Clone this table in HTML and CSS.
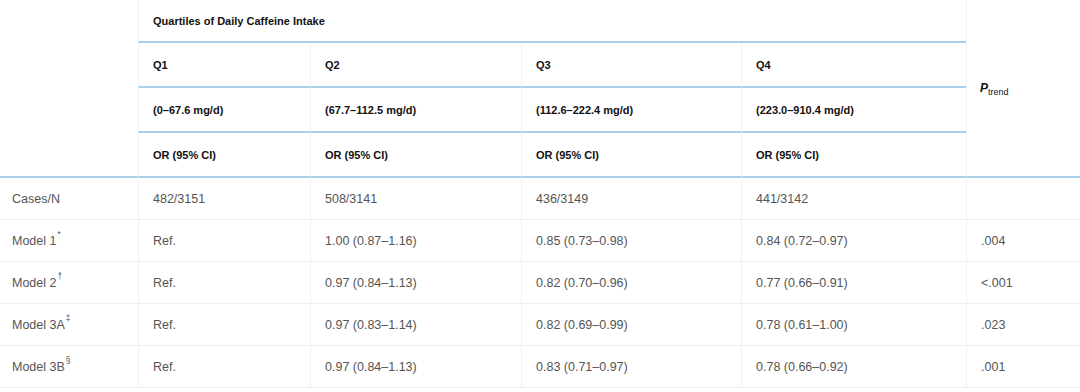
FILE: index.html
```html
<!DOCTYPE html>
<html lang="en">
<head>
<meta charset="utf-8">
<title>Quartiles of Daily Caffeine Intake</title>
<link rel="stylesheet" href="styles.css">
</head>
<body>
<table class="data">
  <colgroup>
    <col class="c0">
    <col class="c1">
    <col class="c2">
    <col class="c3">
    <col class="c4">
    <col class="c5">
  </colgroup>
  <thead>
    <tr class="h0">
      <th class="stub" rowspan="4"></th>
      <th class="group" colspan="4">Quartiles of Daily Caffeine Intake</th>
      <th class="ptrend" rowspan="4"><i class="p">P</i><sub class="sub">trend</sub></th>
    </tr>
    <tr class="h1">
      <th class="hc">Q1</th>
      <th class="hc">Q2</th>
      <th class="hc">Q3</th>
      <th class="hc">Q4</th>
    </tr>
    <tr class="h1">
      <th class="hc">(0–67.6 mg/d)</th>
      <th class="hc">(67.7–112.5 mg/d)</th>
      <th class="hc">(112.6–222.4 mg/d)</th>
      <th class="hc">(223.0–910.4 mg/d)</th>
    </tr>
    <tr class="h1 last">
      <th class="hc">OR (95% CI)</th>
      <th class="hc">OR (95% CI)</th>
      <th class="hc">OR (95% CI)</th>
      <th class="hc">OR (95% CI)</th>
    </tr>
  </thead>
  <tbody>
    <tr>
      <td class="lab">Cases/N</td>
      <td>482/3151</td>
      <td>508/3141</td>
      <td>436/3149</td>
      <td>441/3142</td>
      <td></td>
    </tr>
    <tr>
      <td class="lab">Model 1<sup class="fn">*</sup></td>
      <td>Ref.</td>
      <td>1.00 (0.87–1.16)</td>
      <td>0.85 (0.73–0.98)</td>
      <td>0.84 (0.72–0.97)</td>
      <td>.004</td>
    </tr>
    <tr>
      <td class="lab">Model 2<sup class="fn">†</sup></td>
      <td>Ref.</td>
      <td>0.97 (0.84–1.13)</td>
      <td>0.82 (0.70–0.96)</td>
      <td>0.77 (0.66–0.91)</td>
      <td>&lt;.001</td>
    </tr>
    <tr>
      <td class="lab">Model 3A<sup class="fn">‡</sup></td>
      <td>Ref.</td>
      <td>0.97 (0.83–1.14)</td>
      <td>0.82 (0.69–0.99)</td>
      <td>0.78 (0.61–1.00)</td>
      <td>.023</td>
    </tr>
    <tr>
      <td class="lab">Model 3B<sup class="fn">§</sup></td>
      <td>Ref.</td>
      <td>0.97 (0.84–1.13)</td>
      <td>0.83 (0.71–0.97)</td>
      <td>0.78 (0.66–0.92)</td>
      <td>.001</td>
    </tr>
  </tbody>
</table>
</body>
</html>
```
FILE: styles.css
```css
html, body {
  margin: 0;
  padding: 0;
  background: #ffffff;
}

body {
  font-family: "Liberation Sans", Arial, Helvetica, sans-serif;
}

.data {
  width: 1080px;
  table-layout: fixed;
  border-collapse: separate;
  border-spacing: 0;
}

.c0 { width: 138px; }
.c1 { width: 172px; }
.c2 { width: 211px; }
.c3 { width: 220px; }
.c4 { width: 225px; }
.c5 { width: 114px; }

.data th,
.data td {
  padding: 0 13px;
  text-align: left;
  vertical-align: middle;
  white-space: nowrap;
}

.data th {
  font-size: 11px;
  font-weight: bold;
  color: #111111;
}

.h0 .group {
  height: 41px;
  border-left: 1px solid #f0f0f0;
  border-bottom: 2px solid #a9cfea;
  padding-left: 14px;
}

.h1 .hc {
  height: 43px;
  border-left: 1px solid #f0f0f0;
  border-bottom: 2px solid #a9cfea;
  padding-left: 14px;
}

.stub {
  border-bottom: 2px solid #a9cfea;
}

.ptrend {
  border-left: 1px solid #f0f0f0;
  border-bottom: 2px solid #a9cfea;
  padding-left: 14px;
}

.p {
  font-size: 12px;
  font-style: italic;
  font-weight: bold;
}

.sub {
  font-size: 9px;
  font-weight: normal;
  vertical-align: -3px;
  line-height: 0;
}

.data td {
  height: 41px;
  font-size: 12.5px;
  color: #555555;
  border-left: 1px solid #f0f0f0;
  border-bottom: 1px solid #eeeeee;
  padding-left: 14px;
}

.data td.lab {
  border-left: none;
  padding-left: 12px;
}

.fn {
  font-size: 8.5px;
  line-height: 0;
  vertical-align: 8px;
  margin-left: 1px;
}
```
